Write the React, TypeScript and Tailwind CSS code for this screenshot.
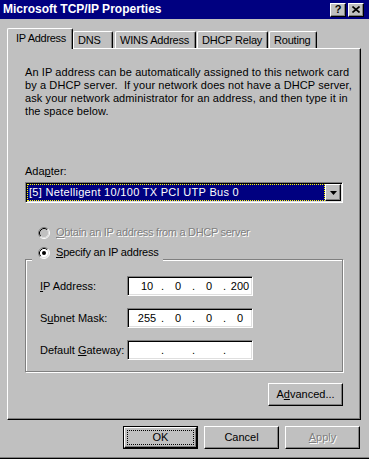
import type { ReactNode } from "react"

const raised = "border border-t-white border-l-white border-r-black border-b-black shadow-[inset_-1px_-1px_#808080]"
const sunken = "border border-t-[#808080] border-l-[#808080] border-r-white border-b-white shadow-[inset_1px_1px_#000,inset_-1px_-1px_#dfdfdf]"
const embossed = "text-[#808080] [text-shadow:1px_1px_0_#ffffff]"

function Radio({ checked, disabled }: { checked?: boolean; disabled?: boolean }) {
     return (
          <svg width="12" height="12" viewBox="0 0 12 12" className="shrink-0">
               <circle cx="6" cy="6" r="5" fill={disabled ? "#c0c0c0" : "#ffffff"} />
               <path d="M2.11 9.89 A5.5 5.5 0 0 1 9.89 2.11" stroke="#808080" fill="none" />
               <path d="M9.89 2.11 A5.5 5.5 0 0 1 2.11 9.89" stroke="#ffffff" fill="none" />
               <path d="M2.82 9.18 A4.5 4.5 0 0 1 9.18 2.82" stroke="#000000" fill="none" />
               <path d="M9.18 2.82 A4.5 4.5 0 0 1 2.82 9.18" stroke="#dfdfdf" fill="none" />
               {checked && <circle cx="6" cy="6" r="2" fill="#000000" />}
          </svg>
     )
}

function IpField({ values }: { values: string[] }) {
     return (
          <div className={`w-[126px] h-[20px] bg-white flex items-center pl-[6px] ${sunken}`}>
               {values.map((v, i) => (
                    <div key={i} className="flex">
                         <span className="w-[26px] text-center">{v}</span>
                         {i < 3 && <span className="w-[5px] text-center">.</span>}
                    </div>
               ))}
          </div>
     )
}

function Tab({ label, w, ml, active }: { label: string; w: string; ml?: string; active?: boolean }) {
     if (active) {
          return (
               <div className={`relative z-10 -mb-px h-[21px] ${w} bg-[#c0c0c0] border-l border-t border-r border-l-white border-t-white border-r-black shadow-[inset_-1px_0_#808080] rounded-tl-[2px] rounded-tr-[2px] pl-[8px] pt-[3px] whitespace-nowrap tracking-[-0.3px]`}>
                    {label}
               </div>
          )
     }
     return (
          <div className={`h-[17px] ${w} ${ml ?? ""} border-l border-t border-r border-l-white border-t-white border-r-black shadow-[inset_-1px_0_#808080] rounded-tl-[2px] rounded-tr-[2px] pl-[4px] pt-[2px] whitespace-nowrap tracking-[-0.2px]`}>
               {label}
          </div>
     )
}

function Button({ children, disabled }: { children: ReactNode; disabled?: boolean }) {
     return (
          <div className={`w-[75px] h-[23px] flex items-center justify-center ${raised} ${disabled ? embossed : ""}`}>
               {children}
          </div>
     )
}

export default function App() {
     return (
          <div className="w-[369px] h-[459px] bg-[#c0c0c0] flex flex-col border-b border-b-black shadow-[inset_0_-1px_#808080] font-['Liberation_Sans',Arial,sans-serif] text-[11px] leading-[13px] text-black select-none">
               {/* title bar */}
               <div className="h-[19px] shrink-0 bg-[#000080] flex items-center justify-between pl-[3px] pr-[5px]">
                    <span className="text-white font-bold text-[12px]">Microsoft TCP/IP Properties</span>
                    <div className="flex gap-[2px]">
                         <div className={`w-[16px] h-[14px] bg-[#c0c0c0] flex items-center justify-center font-bold text-[11px] leading-none ${raised}`}>?</div>
                         <div className={`w-[16px] h-[14px] bg-[#c0c0c0] flex items-center justify-center ${raised}`}>
                              <svg width="8" height="7" viewBox="0 0 8 7">
                                   <path d="M0.5 0.5 L7.5 6.5 M7.5 0.5 L0.5 6.5" stroke="#000" strokeWidth="1.6" />
                              </svg>
                         </div>
                    </div>
               </div>

               <div className="pl-[7px] pt-[9px] flex flex-col">
                    {/* tabs */}
                    <div className="flex items-end h-[20px]">
                         <Tab label="IP Address" w="w-[66px]" active />
                         <Tab label="DNS" w="w-[40px]" />
                         <Tab label="WINS Address" w="w-[81px]" ml="ml-[2px]" />
                         <Tab label="DHCP Relay" w="w-[71px]" ml="ml-[1px]" />
                         <Tab label="Routing" w="w-[48px]" ml="ml-[1px]" />
                    </div>

                    {/* panel */}
                    <div className="w-[354px] h-[372px] border border-l-white border-t-white border-r-black border-b-black shadow-[inset_-1px_-1px_#808080] pt-[17px] px-[17px] flex flex-col">
                         <p className="whitespace-pre tracking-[0.1px]">
                              An IP address can be automatically assigned to this network card<br />
                              by a DHCP server.  If your network does not have a DHCP server,<br />
                              ask your network administrator for an address, and then type it in<br />
                              the space below.
                         </p>

                         <div className="mt-[47px]">Ada<u>p</u>ter:</div>
                         <div className={`mt-[4px] w-[318px] h-[21px] bg-white flex p-[1px] ${sunken}`}>
                              <div className="flex-1 bg-[#000080] border border-dotted border-[#ffff00] text-white pl-[1px] flex items-center whitespace-nowrap tracking-[0.3px]">
                                   [5] Netelligent 10/100 TX PCI UTP Bus 0
                              </div>
                              <div className={`w-[16px] bg-[#c0c0c0] flex items-center justify-center ${raised}`}>
                                   <svg width="7" height="4" viewBox="0 0 7 4">
                                        <polygon points="0,0 7,0 3.5,4" fill="#000" />
                                   </svg>
                              </div>
                         </div>

                         <div className={`mt-[23px] h-[13px] flex items-center gap-[6px] pl-[13px] tracking-[-0.3px] ${embossed}`}>
                              <Radio disabled />
                              <span><u>O</u>btain an IP address from a DHCP server</span>
                         </div>

                         {/* group box */}
                         <div className="mt-[20px] w-[318px] border border-[#808080] shadow-[inset_1px_1px_#fff,1px_1px_#fff] pl-[14px] pb-[11px] flex flex-col">
                              <div className="-mt-[14px] -ml-[8px] h-[15px] self-start bg-[#c0c0c0] flex items-start gap-[6px] pl-[6px] pr-[4px] tracking-[-0.2px]">
                                   <div className="pt-[1px]"><Radio checked /></div>
                                   <span><u>S</u>pecify an IP address</span>
                              </div>
                              <div className="mt-[15px] flex items-center h-[20px]">
                                   <span className="w-[87px]"><u>I</u>P Address:</span>
                                   <IpField values={["10", "0", "0", "200"]} />
                              </div>
                              <div className="mt-[12px] flex items-center h-[20px]">
                                   <span className="w-[87px]">S<u>u</u>bnet Mask:</span>
                                   <IpField values={["255", "0", "0", "0"]} />
                              </div>
                              <div className="mt-[12px] flex items-center h-[20px]">
                                   <span className="w-[87px]">Default <u>G</u>ateway:</span>
                                   <IpField values={["", "", "", ""]} />
                              </div>
                         </div>

                         <div className="mt-[11px] self-end">
                              <Button>A<u>d</u>vanced...</Button>
                         </div>
                    </div>

                    {/* dialog buttons */}
                    <div className="mt-[6px] w-[354px] flex justify-end gap-[6px] pr-[1px]">
                         <div className="w-[75px] h-[23px] border border-black">
                              <div className={`h-full p-[2px] ${raised}`}>
                                   <div className="h-full border border-dotted border-black flex items-center justify-center">OK</div>
                              </div>
                         </div>
                         <Button>Cancel</Button>
                         <Button disabled><u>A</u>pply</Button>
                    </div>
               </div>
          </div>
     )
}
